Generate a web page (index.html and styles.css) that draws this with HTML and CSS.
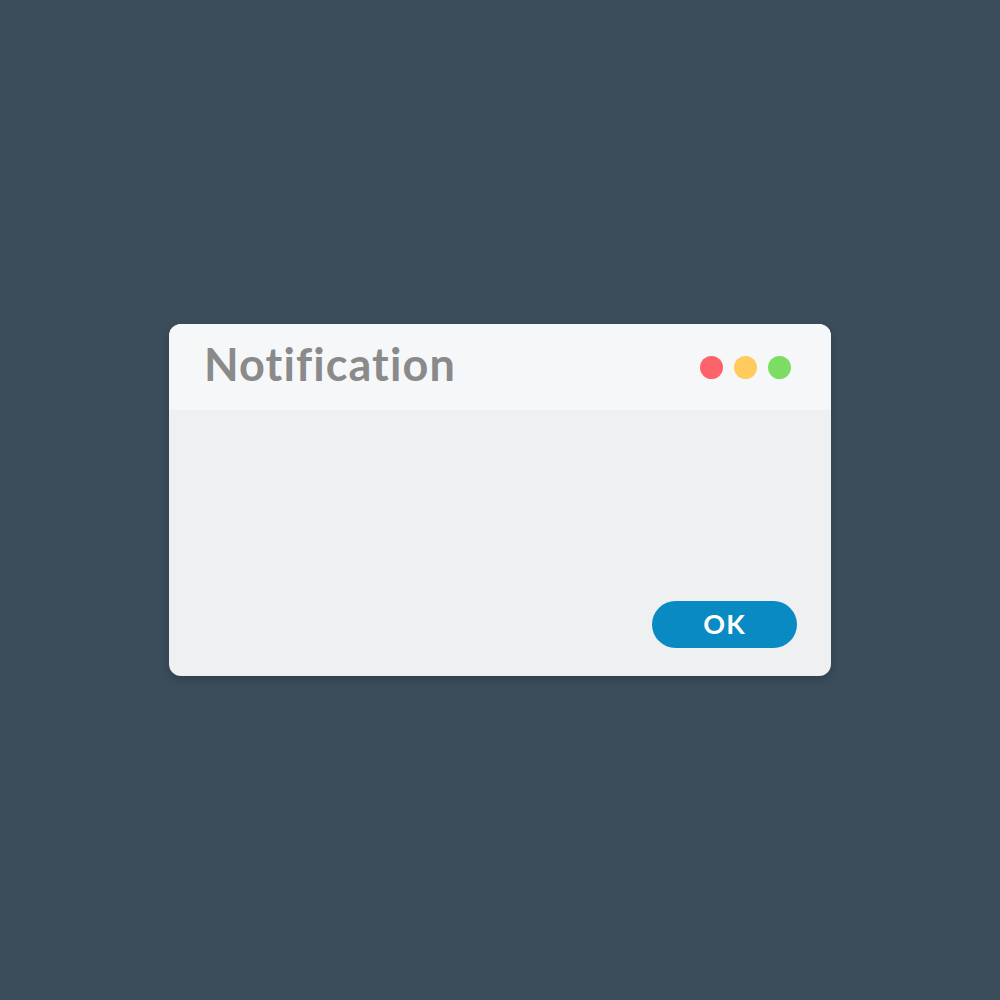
FILE: index.html
```html
<!DOCTYPE html>
<html lang="en">
<head>
<meta charset="utf-8">
<title>Notification</title>
<link rel="stylesheet" href="styles.css">
</head>
<body>
<div class="stage">
  <div class="window">
    <div class="header">
      <h1 class="title">Notification</h1>
      <div class="dots">
        <span class="dot red"></span>
        <span class="dot yellow"></span>
        <span class="dot green"></span>
      </div>
    </div>
    <div class="content">
      <button class="ok">OK</button>
    </div>
  </div>
</div>
</body>
</html>
```
FILE: styles.css
```css
html, body {
  margin: 0;
  padding: 0;
  height: 100%;
}
body {
  background: #3b4c5b;
  font-family: Lato, "Open Sans", "Liberation Sans", sans-serif;
}
.stage {
  width: 1000px;
  height: 1000px;
  display: flex;
  align-items: center;
  justify-content: center;
}
.window {
  width: 662px;
  height: 352px;
  border-radius: 12px;
  overflow: hidden;
  background: #eff0f2;
  box-shadow: 0 3px 8px rgba(0, 0, 0, 0.18);
  display: flex;
  flex-direction: column;
}
.header {
  height: 86px;
  flex: none;
  background: #f6f7f9;
  display: flex;
  align-items: center;
  justify-content: space-between;
  padding: 0 40px 0 35px;
}
.title {
  margin: 0;
  font-size: 45px;
  font-weight: 700;
  color: #8a8a8a;
  letter-spacing: 1.1px;
  line-height: 1;
  padding-bottom: 6px;
}
.dots {
  display: flex;
  gap: 11px;
  margin-top: 1px;
}
.dot {
  width: 23px;
  height: 23px;
  border-radius: 50%;
}
.red { background: #fd6469; }
.yellow { background: #ffcb5d; }
.green { background: #7ddc64; }
.content {
  flex: 1;
  display: flex;
  align-items: flex-end;
  justify-content: flex-end;
  padding: 0 34px 28px 0;
}
.ok {
  width: 145px;
  height: 47px;
  border: none;
  border-radius: 24px;
  background: #0a8ac3;
  color: #ffffff;
  font-family: Lato, "Open Sans", "Liberation Sans", sans-serif;
  font-size: 27px;
  font-weight: 700;
  letter-spacing: 1px;
  padding: 0 0 2px 0;
  line-height: 1;
}
```
